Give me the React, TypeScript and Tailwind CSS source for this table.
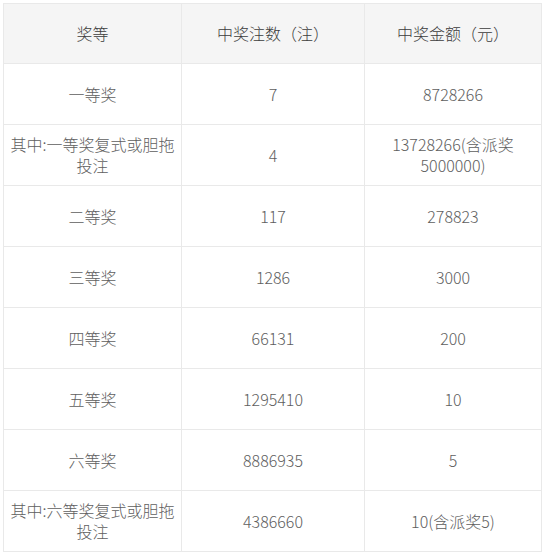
import React from 'react';

const rows: [string, string, string][] = [
  ['一等奖', '7', '8728266'],
  ['其中:一等奖复式或胆拖投注', '4', '13728266(含派奖5000000)'],
  ['二等奖', '117', '278823'],
  ['三等奖', '1286', '3000'],
  ['四等奖', '66131', '200'],
  ['五等奖', '1295410', '10'],
  ['六等奖', '8886935', '5'],
  ['其中:六等奖复式或胆拖投注', '4386660', '10(含派奖5)'],
];

const cell = 'border border-[#e9e9e9] px-[6px] text-center align-middle';

const App = () => {
  return (
    <div
      className="w-[545px] h-[556px] bg-white pt-[3px] pl-[3px]"
      style={{ fontFamily: '"Microsoft YaHei", "Noto Sans CJK SC", sans-serif' }}
    >
      <table className="border-collapse table-fixed w-[538px] text-[16px] leading-[21px] font-light text-[#5e5e5e]">
        <colgroup>
          <col className="w-[178px]" />
          <col className="w-[183px]" />
          <col className="w-[177px]" />
        </colgroup>
        <thead>
          <tr className="bg-[#f5f5f5] text-[#3c3c3c]">
            <th className={`${cell} h-[60px] font-light`}>奖等</th>
            <th className={`${cell} h-[60px] font-light`}>中奖注数（注）</th>
            <th className={`${cell} h-[60px] font-light`}>中奖金额（元）</th>
          </tr>
        </thead>
        <tbody>
          {rows.map(([level, count, amount]) => (
            <tr key={level}>
              <td className={`${cell} h-[61px]`}>{level}</td>
              <td className={`${cell} h-[61px]`}>{count}</td>
              <td className={`${cell} h-[61px]`}>{amount}</td>
            </tr>
          ))}
        </tbody>
      </table>
    </div>
  );
};

export default App;
